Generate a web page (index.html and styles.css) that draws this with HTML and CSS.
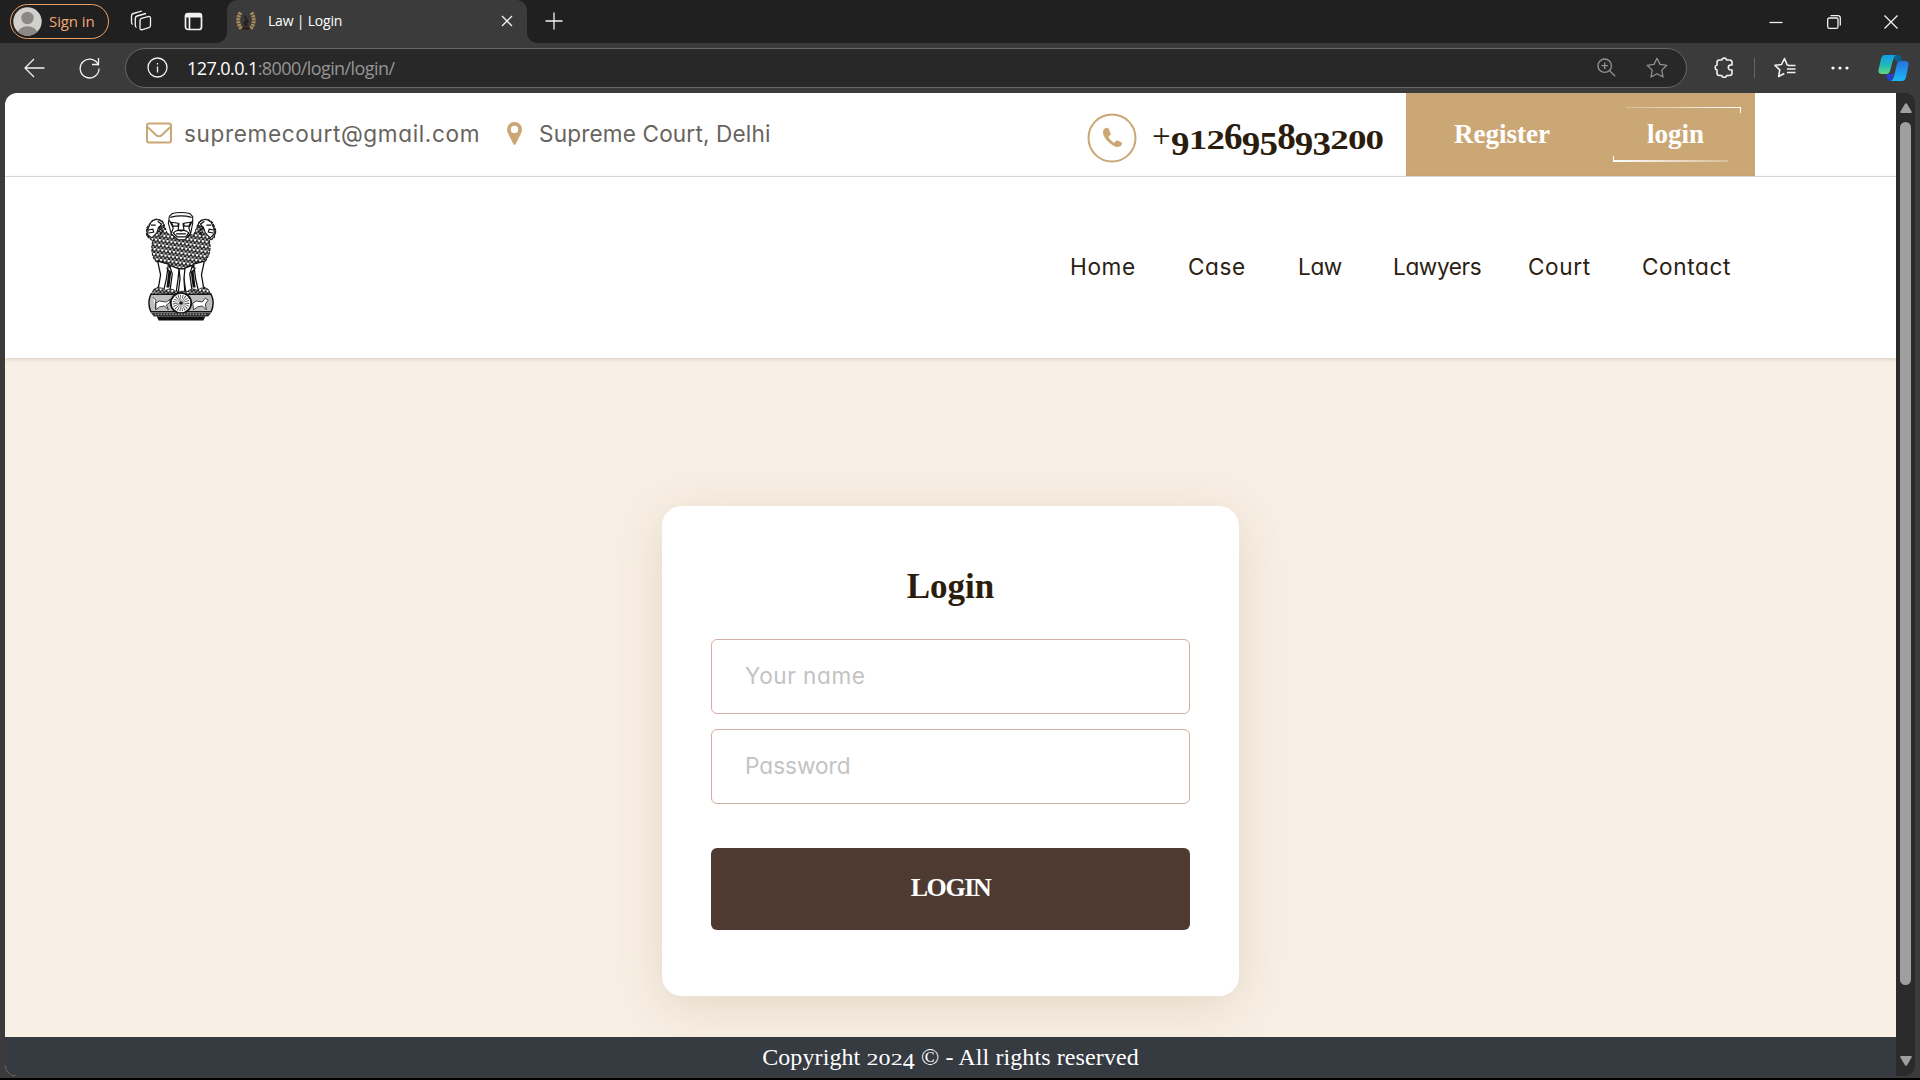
FILE: index.html
```html
<!DOCTYPE html>
<html lang="en">
<head>
<meta charset="utf-8">
<title>Law | Login</title>
<link rel="stylesheet" href="styles.css">
</head>
<body>
<div class="browser">
  <div class="tabstrip">
    <div class="profile">
      <svg width="29" height="29" viewBox="0 0 29 29"><defs><clipPath id="av"><circle cx="14.5" cy="14.5" r="14.2"/></clipPath></defs><circle cx="14.5" cy="14.5" r="14.2" fill="#d2d0cc"/><g clip-path="url(#av)" fill="#8b8885"><circle cx="14.5" cy="11" r="6.2"/><ellipse cx="14.5" cy="27" rx="10" ry="7.8"/></g></svg>
      <span>Sign in</span>
    </div>
    <svg class="ic workspaces" width="22" height="22" viewBox="0 0 22 22"><path d="M11.500 8.300l6.500-1.700q2.500-.6 2.500 1.700v7.200q0 1.700-1.700 2.200l-6.300 1.900q-2.500.7-2.500-1.700v-7.300q0-1.800 1.500-2.300z"/><path d="M6.500 17.500q-1.200-.5-1.200-2.500V8.500q0-2 1.800-2.500L16 3.500"/><path d="M2.700 14.500Q1.500 14 1.500 12V6q0-2 1.800-2.500L12 1"/></svg>
    <svg class="ic tabactions" width="19" height="19" viewBox="0 0 19 19"><rect x="1.500" y="1.500" width="16" height="16" rx="2.500"/><path d="M1.500 3.500h16" stroke-width="4"/><path d="M5.500 5v12"/></svg>
    <div class="tab">
      <svg width="20" height="20" viewBox="0 0 20 20"><g fill="none" stroke="#a98a5d" stroke-width="3.800" stroke-dasharray="2.300 .7"><path d="M4.500 1.500Q-.5 10 5.500 18"/><path d="M15.500 1.500Q20.500 10 14.500 18"/></g><path d="M6.500 18.500h7v-2.500h-7zM8 15h4l-1-3 2-1-4-7-1 1 1.500 4-2 2z" fill="#2a2019"/></svg>
      <span>Law | Login</span>
      <svg class="ic close" width="12" height="12" viewBox="0 0 12 12"><path d="M1 1l10 10M11 1 1 11"/></svg>
    </div>
    <svg class="ic newtab" width="18" height="18" viewBox="0 0 18 18"><path d="M9 .5v17M.5 9h17"/></svg>
    <div class="winbtns">
      <svg class="ic" width="14" height="14" viewBox="0 0 14 14"><path d="M.5 7.500h13"/></svg>
      <svg class="ic" width="14" height="14" viewBox="0 0 14 14"><rect x=".7" y="3" width="10.300" height="10.300" rx="1.500"/><path d="M3.500.7h7.500q2.300 0 2.300 2.300v7.500"/></svg>
      <svg class="ic" width="14" height="14" viewBox="0 0 14 14"><path d="M.5.5l13 13M13.500.5l-13 13"/></svg>
    </div>
  </div>
  <div class="toolbar">
    <svg class="ic back" width="21" height="20" viewBox="0 0 21 20"><path d="M20.500 10H1M10 1 1 10l9 9"/></svg>
    <svg class="ic reload" width="21" height="22" viewBox="0 0 21 22"><path d="M19.500 8.500A9.400 9.400 0 1 0 20 11.500M19.500 1v6.500H13"/></svg>
    <div class="address">
      <svg class="ic" width="21" height="21" viewBox="0 0 21 21"><circle cx="10.500" cy="10.500" r="9.500"/><path d="M10.500 9.500v6M10.500 6v1.600"/></svg>
      <div class="url"><b>127.0.0.1</b>:8000/login/login/</div>
      <svg class="ic dim" width="19" height="19" viewBox="0 0 19 19"><circle cx="7.700" cy="7.700" r="6.700"/><path d="M12.700 12.700l5.500 5.500M7.700 4.500v6.400M4.500 7.700h6.400"/></svg>
      <svg class="ic dim star" width="22" height="21" viewBox="0 0 22 21"><path d="M11 1.200l3 6.200 6.800.9-5 4.800 1.200 6.900-6-3.300L5 20l1.200-6.900-5-4.800L8 7.400z"/></svg>
    </div>
    <svg class="ic puzzle" width="20" height="21" viewBox="0 0 20 21"><path d="M3 5.500Q3 3 5.500 3h2.200a2.600 2.600 0 0 1 5 0H15.500Q18 3 18 5.500V8h-1.200a2.500 2.500 0 0 0 0 5H18v3q0 2.500-2.500 2.500h-2.800a2.600 2.600 0 0 1-5 0H5.500Q3 18.500 3 16v-3a2.600 2.600 0 0 1 0-5z"/></svg>
    <i class="divider"></i>
    <svg class="ic favs" width="22" height="21" viewBox="0 0 22 21"><path d="M14.500 8H13.200L10.500 1.500 7.500 7.500l-6.500.8 4.800 4.600L4.600 19.500l5.700-3M14 8.500h7.500M13 12h8.500M13 15.500h8.500"/></svg>
    <svg class="dots" width="18" height="4" viewBox="0 0 18 4"><g fill="#fff"><circle cx="2" cy="2" r="1.600"/><circle cx="9" cy="2" r="1.600"/><circle cx="16" cy="2" r="1.600"/></g></svg>
    <svg class="copilot" width="31" height="28" viewBox="0 0 31 28"><defs><linearGradient id="c1" x1="0" y1="0" x2="0" y2="1"><stop offset="0" stop-color="#129ee6"/><stop offset=".55" stop-color="#22b9b5"/><stop offset="1" stop-color="#65d87f"/></linearGradient><linearGradient id="c2" x1="0" y1="0" x2="0" y2="1"><stop offset="0" stop-color="#2672df"/><stop offset="1" stop-color="#19b8f5"/></linearGradient></defs><path d="M15 1h5q3 0 4 6l-6 1z" fill="#08608f"/><path d="M8 20h8l-3 7q-4 1-5-7z" fill="#2340d0"/><path d="M7 1h11q-2 1-3 5l-3 11q-1 3-4 3H4q-4 0-3.500-4L3 5q1-4 4-4z" fill="url(#c1)"/><path d="M23 7h4q4 0 3.500 4L28 23q-1 4-4 4H13q2-1 3-5l3-12q1-3 4-3z" fill="url(#c2)"/></svg>
  </div>
  <div class="viewport">
    <div class="page">
      <div class="topbar">
        <div class="contact mail">
          <svg width="26" height="22" viewBox="0 0 26 22"><g fill="none" stroke="#cba775" stroke-width="2"><rect x="1" y="1.500" width="24" height="19" rx="2"/><path d="M1.500 5q4 3.500 8.500 8 3 2.500 6 0 4.500-4.500 8.500-8"/></g></svg>
          <span>supremecourt@gmail.com</span>
        </div>
        <div class="contact place">
          <svg width="15" height="23" viewBox="0 0 15 23"><path fill-rule="evenodd" fill="#cba775" d="M7.500 0A7.400 7.400 0 0 0 0 7.300C0 10 1 11.500 2 13.500L6.300 22q1.200 1.700 2.400 0L13 13.500c1-2 2-3.500 2-6.200A7.400 7.400 0 0 0 7.500 0zm0 3.700a3.700 3.700 0 1 1 0 7.400 3.700 3.700 0 0 1 0-7.400z"/></svg>
          <span>Supreme Court, Delhi</span>
        </div>
        <div class="phone">
          <svg width="50" height="50" viewBox="0 0 50 50"><circle cx="25" cy="25" r="23.500" fill="none" stroke="#cba775" stroke-width="2"/><path fill="#cba775" d="M18.500 15q-2.500 1-2.500 4 0 5 5.500 10t9 5q3.500 0 4.500-3.200.2-1-.8-1.500l-3.400-1.900q-1-.5-1.700.4l-1.200 1.500q-.8.7-1.700 0-2.700-1.800-4.400-4.500-.5-1 .3-1.700l1.200-1q.8-.7.4-1.700L21.800 16q-.8-2-3.300-1z"/></svg>
          <div class="number"><em>+</em><i class="lo">9</i><i class="sm">1</i><i class="sm">2</i><i>6</i><i class="lo">9</i><i class="lo">5</i><i>8</i><i class="lo">9</i><i class="lo">3</i><i class="sm">2</i><i class="sm">0</i><i class="sm">0</i></div>
        </div>
        <div class="actions">
          <a class="register">Register</a>
          <a class="signin">login</a>
        </div>
      </div>
      <div class="header">
        <svg class="emblem" width="71" height="110" viewBox="0 0 73 112">
          <defs>
            <pattern id="fur" width="4" height="5" patternUnits="userSpaceOnUse" patternTransform="rotate(8)"><rect width="4" height="5" fill="#fff"/><path d="M0 0q0 3 2 3.500Q4 3 4 0M2 3.500V5M-2 2.500Q-2 5 0 5.500 2 5 2 2.500M2 2.500Q2 5 4 5.500" fill="none" stroke="#111" stroke-width="1.100"/></pattern>
            <pattern id="hatch" width="3" height="2" patternUnits="userSpaceOnUse"><path d="M0 1h3" stroke="#222" stroke-width=".8"/></pattern>
          </defs>
          <g stroke="#111" stroke-width="1.100">
            <path fill="url(#fur)" stroke-dasharray="3 1" d="M22 22 17 9Q10 4 5 10L0 17v6l4 4 3 2Q4 42 10 50l10 5 16 5 17-5 8-5q7-10 4-21l5-3 2-7-3-8Q63 4 55 9l-6 14z"/>
            <path fill="#fff" d="M5 10q5-5 11-1l3 4-6 2-2 6-5 5-4-3v-6zM67 10q-5-5-11-1l-3 4 6 2 2 6 5 5 4-4v-5z"/>
            <path fill="#fff" d="M24 4l3-3q9-2 18 0l3 3v7l-2 10-6 7h-7l-7-6-3-11z"/>
          </g>
          <g fill="none" stroke="#111" stroke-width="1.200">
            <path d="M25 5q11-3 22 0M26 10l7 1v3h-5zM46 10l-7 1v3h5zM34 11l-1 7h6l-1-7M28 21q4-4 8-2 4-2 8 2l-3 4h-9zM31 22h10M24 8l4 8-2 5M48 8l-4 8 2 5"/>
            <path d="M2 18l5-1 1 3-5 1M5 13h5M12 9l4 3-3 4 4 3-3 5M70 18l-5-1-1 3 5 1M67 13h-5M60 9l-4 3 3 4-4 3 3 5"/>
          </g>
          <g fill="#fff" stroke="#111" stroke-width="1.300">
            <path d="M12 50l3 14-2 12-4 5h9l3-13 2-15zM60 50l-3 14 2 12 4 5h-9l-3-13-2-15z"/>
            <path d="M24 54l3 9-2 15-2 4h8l2-14 1-10zM48 54l-3 9 2 15 2 4h-8l-2-14-1-10z"/>
            <path d="M34 58l1 10-2 15h7l-1-15 1-10z"/>
          </g>
          <path d="M20 56l3 5-2 16h3l2-16zM52 56l-3 5 2 16h-3l-2-16z" fill="#111"/>
          <path d="M8 79q7-4 12 1 7-3 10 1h13q4-4 10-1 6-5 11-1l3 6H5z" fill="url(#fur)" stroke="#111" stroke-width=".8"/>
          <path d="M5 84h62q4 9 0 18H5q-4-9 0-18z" fill="#fff" stroke="#111" stroke-width="1.500"/>
          <path d="M5 84h62q4 9 0 18H5q-4-9 0-18z" fill="url(#hatch)" opacity=".75"/>
          <path d="M7 87l3 3v9M10 93l4-2 7 1 4-3-1 4-3 2 2 5-4-4-5 1-4 3zM48 93l4-2 6 1 3-4 3 2-3 4 1 6-4-4-5 1-4 3z" fill="#fff" stroke="#111" stroke-width=".8"/>
          <circle cx="36" cy="93" r="10.500" fill="#fff" stroke="#111" stroke-width="1.800"/>
          <circle cx="36" cy="93" r="5" fill="none" stroke="#444" stroke-width="7" stroke-dasharray=".6 1"/>
          <circle cx="36" cy="93" r="1.800" fill="#111"/>
          <path d="M5 103h62l-3 4H8z" fill="#333"/><path d="M11 107h50l-2 4H13z" fill="#111"/>
          <path d="M9 104.500h54" stroke="#fff" stroke-width=".8" stroke-dasharray="1.500 1.500"/>
        </svg>
        <nav class="nav">
          <a>Home</a><a>Case</a><a class="tight">Law</a><a class="tight">Lawyers</a><a>Court</a><a>Contact</a>
        </nav>
      </div>
      <main class="main">
        <form class="card">
          <h1>Login</h1>
          <div class="field name">Your name</div>
          <div class="field pass">Password</div>
          <div class="submit">LOGIN</div>
        </form>
      </main>
      <footer class="footer">Copyright <span class="year"><i class="sm">2</i><i class="sm">0</i><i class="sm">2</i><i class="lo">4</i></span> © - All rights reserved</footer>
    </div>
    <div class="scrollbar">
      <svg width="12" height="10" viewBox="0 0 12 10"><path d="M5 .7q1-1 2 0l4.700 8q.5 1.300-1 1.300H1.300Q-.2 10 .3 8.700z" fill="#9f9f9f"/></svg>
      <i class="thumb"></i>
      <svg class="down" width="12" height="10" viewBox="0 0 12 10"><path d="M5 9.300q1 1 2 0l4.700-8Q12.200 0 10.700 0H1.300Q-.2 0 .3 1.300z" fill="#9f9f9f"/></svg>
    </div>
  </div>
</div>
</body>
</html>
```
FILE: styles.css
```css
* { box-sizing: border-box; }
body { margin: 0; background: #000; }
svg { display: block; flex: none; }

.browser {
  width: 1920px;
  height: 1078px;
  background: #3b3b3b;
  font-family: "Open Sans", "Noto Sans", sans-serif;
}
.ic { fill: none; stroke: #f2f2f2; stroke-width: 1.3; stroke-linejoin: round; }
.dim { stroke: #929292; }

/* Tab strip */
.tabstrip { display: flex; align-items: center; height: 43px; background: #202020; padding: 0 22px 0 10px; }
.profile {
  display: flex;
  align-items: center;
  gap: 7px;
  width: 99px;
  height: 35px;
  margin-top: -1px;
  padding-left: 2px;
  border: 1.500px solid #eda265;
  border-radius: 18px;
  color: #f2a873;
  font-size: 15px;
  letter-spacing: -0.1px;
  white-space: nowrap;
}
.workspaces { margin-left: 21px; margin-top: -1px; }
.tabactions { margin-left: 32px; margin-top: -1px; stroke-width: 1.7; }
.tab {
  position: relative;
  display: flex;
  align-items: center;
  width: 300px;
  height: 43px;
  margin-left: 24px;
  padding: 0 14px 2px 9px;
  background: #3b3b3b;
  border-radius: 10px 10px 0 0;
  color: #fff;
  font-size: 14px;
  letter-spacing: -0.2px;
}
.tab::before, .tab::after {
  content: "";
  position: absolute;
  bottom: 0;
  left: -10px;
  width: 10px;
  height: 10px;
  background: radial-gradient(circle at 0 0, #202020 9.500px, #3b3b3b 10px);
}
.tab::after { left: auto; right: -10px; background: radial-gradient(circle at 100% 0, #202020 9.500px, #3b3b3b 10px); }
.tab span { margin-left: 12px; flex: 1; }
.newtab { margin-left: 18px; margin-top: -2px; }
.winbtns { display: flex; gap: 43.500px; margin-left: auto; }

/* Toolbar */
.toolbar { display: flex; align-items: center; height: 50px; padding: 0 11px 0 24px; }
.toolbar > .ic, .address > .ic { margin-top: -1px; }
.reload { margin-left: 34px; }
.address {
  display: flex;
  align-items: center;
  width: 1563px;
  height: 40px;
  margin-left: 25px;
  padding: 0 18px 0 21px;
  background: #282828;
  border: 1px solid #666;
  border-radius: 20px;
}
.url { flex: 1; margin: -1px 0 0 19px; color: #959595; font-size: 18px; letter-spacing: -0.58px; }
.url b { color: #fff; font-weight: 400; }
.star { margin-left: 30px; }
.puzzle { margin-left: 27px; stroke-width: 1.6; }
.divider { width: 1.500px; height: 20px; margin-left: 20px; background: #646464; }
.favs { margin-left: 19px; stroke-width: 1.6; }
.dots { margin-left: 35px; }
.copilot { margin-left: 29px; }

/* Viewport */
.viewport { display: flex; height: 983px; margin: 0 5px; }
.page {
  display: flex;
  flex-direction: column;
  width: 1891px;
  overflow: hidden;
  background: #fff;
  border-radius: 12px 0 0 12px;
  font-family: "Inter", sans-serif;
  font-feature-settings: "cv11";
  font-size: 22.600px;
}
.scrollbar {
  display: flex;
  flex-direction: column;
  align-items: center;
  width: 19px;
  padding: 10px 0;
  background: #2b2b2b;
  border-radius: 0 10px 10px 0;
}
.thumb { width: 11px; height: 863px; margin-top: 9px; border-radius: 6px; background: #9f9f9f; }
.down { margin-top: auto; }

/* Contact bar */
.topbar {
  display: flex;
  align-items: center;
  height: 84px;
  padding: 0 141px;
  border-bottom: 1px solid #dedede;
}
.contact { display: flex; align-items: center; color: #676460; margin-top: -3px; white-space: nowrap; }
.mail { width: 361px; gap: 12px; letter-spacing: 0.62px; }
.place { gap: 17px; letter-spacing: 0.15px; }
.phone { display: flex; align-items: center; gap: 15px; width: 319px; margin: 7px 0 0 auto; }
.number {
  display: flex;
  margin-top: -3px;
  font: bold 37px/1 "Liberation Serif", serif;
  color: #2b1d0e;
}
.number em { width: 19px; font: 400 33px/37px "Liberation Serif", serif; }
.number i { width: 17.700px; font-style: normal; }

/* Old-style figures: short ones keep the x-height, tall ones hang below the baseline */
.sm, .lo { display: inline-block; line-height: 1; font-style: normal; transform-origin: 0 83.75%; }
.sm { transform: scaleY(0.73); }
.lo { transform: translateY(16%) scaleY(0.92); }

.actions {
  display: flex;
  align-items: center;
  align-self: stretch;
  width: 349px;
  background: #cba775;
  color: #fff;
  font: bold 27px/1 "Liberation Serif", serif;
}
.register { width: 207px; padding-left: 48px; }
.signin {
  width: 128px;
  height: 55px;
  padding: 14px 0 0 34px;
  background:
    linear-gradient(90deg, #fff4, #fff) 100% 0 / 115px 1px no-repeat,
    linear-gradient(#fff, #fff) 100% 0 / 1px 6px no-repeat,
    linear-gradient(90deg, #fff, #fff4) 0 100% / 115px 2px no-repeat,
    linear-gradient(#fff, #fff) 0 100% / 1px 6px no-repeat;
}

/* Logo and navigation */
.header {
  position: relative;
  display: flex;
  align-items: center;
  justify-content: space-between;
  height: 181px;
  padding: 0 165px 0 141px;
  box-shadow: 0 1px 4px rgba(80, 60, 40, 0.2);
  background: #fff;
}
.emblem { margin-top: -1px; }
.nav { display: grid; grid-template-columns: 118px 110px 95px 135px 114px 89px; margin-top: -2px; color: #2b2113; letter-spacing: 0.6px; }
.nav .tight { letter-spacing: -0.4px; }

/* Login card */
.main { flex: 1; padding-top: 148px; background: #f8efe5; }
.card {
  display: flex;
  flex-direction: column;
  width: 577px;
  height: 490px;
  margin: 0 auto;
  padding: 60px 49px 0;
  background: #fff;
  border-radius: 20px;
  box-shadow: 0 10px 50px rgba(160, 130, 80, 0.22);
}
.card h1 { height: 73px; margin: 0; font: bold 35px/41px "Liberation Serif", serif; text-align: center; color: #2b1d0e; }
.field {
  display: flex;
  align-items: center;
  height: 75px;
  padding: 0 33px 3px;
  border: 1px solid #d1b0a2;
  border-radius: 6px;
  color: #c3c3c3;
}
.name { letter-spacing: 0.55px; }
.pass { margin-top: 15px; letter-spacing: 0; }
.submit {
  height: 82px;
  margin-top: 44px;
  border-radius: 6px;
  background: #4f3a31;
  color: #fff;
  font: bold 26px/80px "Liberation Serif", serif;
  letter-spacing: -1.4px;
  text-align: center;
}
.footer {
  height: 39px;
  background: #363a41;
  color: #fff;
  font: 24px/40px "Liberation Serif", serif;
  letter-spacing: 0.1px;
  text-align: center;
}
```
